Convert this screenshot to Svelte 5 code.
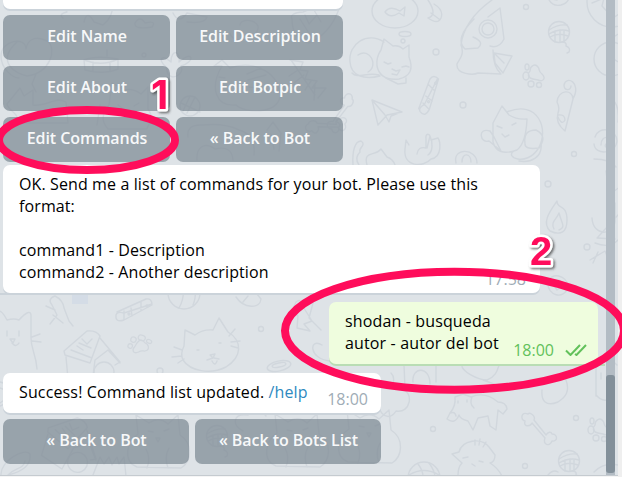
<script>
  const editRows = [
    ['Edit Name', 'Edit Description'],
    ['Edit About', 'Edit Botpic'],
    ['Edit Commands', '« Back to Bot'],
  ];
  const backRow = ['« Back to Bot', '« Back to Bots List'];
</script>

<main class="chat">
  <svg class="doodles" width="618" height="477" viewBox="0 0 618 477" aria-hidden="true">
    <defs>
      <g id="paw"><path d="M0 7c-5-1-6-5-3-8 0-5 5-8 8-4 2 2 0 4 4 7 5 5 0 8-4 6z"/><ellipse cx="-7" cy="4" rx="3" ry="4"/><ellipse cx="-6" cy="-5" rx="2" ry="3"/><circle cx="-2" cy="12" r="3"/><circle cx="6" cy="13" r="2.5"/></g>
      <g id="yarn"><circle r="10.5"/><path d="M-10-2q9-6 18-5M-10 2q10-6 20-3M-9 5q8-5 18-1M-4-1v11M1-2v12M5-1v10M3 10q5 0 4 4 5 2 3 6l-2 1"/></g>
      <g id="bone"><path d="M-10-13c-7-3-8 6-3 7-2 6 5 6 7 2L7 11c-3 7 5 9 7 3 6 1 6-7 0-7-1-3-4-2-6 1L-4-7c2-4-4-8-6-6z"/></g>
      <g id="sleepcat"><path d="M-2-16c-17-11-36 2-34 20 1 14 14 18 30 14M-5-8l3-11 9 7q6-1 10 3l6-4v12q7 18-10 22-19 2-22-13-1-9 4-16zM-34 15c5 6 15-1 27 2M-28-3c12-8 21 11 10 17"/><path d="m-2 4 4 2 3-1m11 4 4-1 3 1M6 11l4 2 4-1-3 5-5-1M0 20l12 6 8-1v-5"/></g>
      <g id="plane"><path d="m-15-12 6 25 9-10 15-3zM-15-12-2 3l4 7 2-6 10-4"/></g>
      <g id="mouse"><path d="M-8 1c1-13 16-13 16-3L0 30q-10-8-7-18 2-5-1-11zM8-2c9-17-7-24-9-14 0 6 7 6 7 1M-7 14q7-1 7 5-3 6-7-3"/></g>
      <g id="cat"><path d="M-20 30-17-7l-2-19q3-6 10 7 7-2 12 0 11-12 12-5v20c-1 13 5 18 6 34M-9-8v5m12-5v5M-6 0h5l-2 4zm2 4q4 5 7 0M16-2l8-3M16 2l9 1"/></g>
      <g id="collar"><path d="m-17 1 29-13q6-1 6 6L-10 9q-9 3-8-5 1-4 8-2L18-7M-10 0v9M7-10v9M-3-3l1 8"/><circle cx="-5" cy="3" r="1"/><circle cx="13" cy="-5" r="1"/></g>
      <g id="sitcat"><path d="M-21 29c-15-6-10-26 1-33l-2-19 13 8Q1-22 10-14l10-9 2 20c14 9 11 27 1 33zM-10-7l5 1m11-1 5-2M-2 0h4l-2 4zM-12 11q5 9 1 19m22-20q-5 9-1 20"/></g>
      <g id="house"><path d="m-25-4 23-20q9-1 13 5L1 8l-25-8zm2 6 2 22 24 5L6 5M11-17 31 7l-5 3M6 5 19-5l12 13M-18-5 3 3M-10-12l12 5"/><circle cx="15" cy="17" r="10"/><path d="m-12-9 6 4m-1-11 5 5 5-5"/></g>
      <g id="flame"><path d="M-8 13c-9-9 1-21 7-30 0 9 10 2 10 19 0 12-6 16-17 11zM-4 11c-4-7 3-10 5-16 3 11 7 14 0 17"/></g>
      <g id="ball"><circle r="16"/><path d="M-15-3q15-9 30 0M-6-14q10 13 1 29M5-15Q15-2 9 12"/></g>
    </defs>
    <g fill="none" stroke="#d1d7dd" stroke-width="1.4" stroke-linecap="round" stroke-linejoin="round">
      <ellipse cx="395" cy="11" rx="23" ry="17"/><path d="M385 12q5-7 15-1l5-4-1 9-5-3q-9 6-14-1zM428 0q10 15 0 18 10 7 13 0 3-8-7-14m-3 9 8 6"/>
      <ellipse cx="405" cy="34" rx="6" ry="2.5"/><circle cx="403" cy="41" r="2"/>
      <use href="#sleepcat" x="386" y="58"/><use href="#plane" x="387" y="112"/><use href="#collar" transform="translate(430 96)rotate(-45)"/>
      <path d="M492 0q-28 20-31 45c4 10-2 14-4 19-1 11 17 11 21 9l23 1q-8-7-8-24M474 19q-20 20-9 30l13-1q7-6-5-11M488 17l12-9 4 31q-5 10-14 7"/>
      <circle cx="488" cy="29" r="9"/><circle cx="488" cy="29" r="6"/>
      <path d="M494 53l18 3-9 17-8-10zm0 0 10 10"/><path d="M548-2q4 9 13 7 7-2 8-7m-17 1 5 1"/>
      <circle cx="526" cy="7" r="2.5"/><circle cx="436" cy="52" r="3"/><circle cx="463" cy="105" r="3"/><circle cx="574" cy="154" r="2.5"/><circle cx="548" cy="184" r="3"/><circle cx="587" cy="247" r="3"/>
      <use href="#yarn" x="559" y="32"/><use href="#paw" x="533" y="72"/><use href="#mouse" x="565" y="101"/>
      <circle cx="612" cy="2" r="25"/><path d="m592 3 12-5-2 8 11 12 9-6"/>
      <circle cx="611" cy="59" r="17"/><circle cx="624" cy="48" r="15"/>
      <path d="M493 123l9-17 7 9q8 5 18 4-1 24-10 31-20 7-24-8 0-10 0-19zM507 112c31-13 43 18 31 37-12 18-34 8-24 2M525 143q-2-13 11-13 12 6 3 18-15 2-14-5M490 131c-13-4-10 13-1 10l12 10-7-14zM541 143c2 15-11 20-22 18M497 126l5 2m10-3 4-2M502 134l3 3 4-2"/>
      <path d="M595 137c4-12 22-8 22 4-1 13-22 15-23 3m7 1c0-12 14-8 10 0-2 5-8 2-5-1"/>
      <path d="M409 145l-3-5-1 9c-2 18 18 19 26 10 12-2 9-18 7-21l-7 2c-1-8-6-7-5-1v9q-8-2-9 6m10-6 3-12c3 6 3 16-2 19"/>
      <path d="M353 165c-1-14 2-24 8-24 6 4-3 7-1 11q-6 6-1 13M367 165c-4-15 8-8 14-16l6 8q6 2 8 8M456 163c-4-16 21-15 21 0m-15-1c0-10 9-9 9 0"/>
      <path d="M611 98q9 7 7 24M594 159q16 0 22 8"/>
      <use href="#bone" transform="translate(342 112)rotate(76)"/>
      <use href="#flame" x="558" y="218"/>
      <path d="M606 171l3 24 12-9M592 218c1 19 22 18 23 3v-18M598 237l20-22m-21 23 18 1m-20 4q15 6 23-3"/>
      <path d="M590 260l15-9 8 19m-20-7 5-11M548 283c2-12 20-8 20 4-4 14-21 8-20-4zm5 1 6-4 4 5-6 5z"/>
      <path d="M17 42c-22 20-1 32 10 34 23-2 31-28 20-35-14-7-20 1-21 8 0-13-25-9-25 7 0 13 12 22 18 22m17-4-4 10m0 0 4 8"/>
      <path d="M84 60q12-5 34-1v10q-14 6-33 1zm0 0q18 7 34-1m-25 3v9m17-9v9"/>
      <path d="M109 105l3-22 13 7q8-2 16 4l7-7v22c8 12-1 15-1 20H108c-8-9-5-16 1-24zM118 105l4 3m12-2 5-3m-14 8 4 2"/>
      <path d="M7 104l13-16 4 8 9-6v15c13 2 23-9 33-3l2 21H15c8-8-7-12-8-19zM97 125l3-20m7-55v6M58 0l9 12q-9 2-4 6M84 22q3-13 10 0l9 3q11-8 10-25M135 23q5-8 10 0 12-3 7 4-18 3-17-4"/>
      <circle cx="144" cy="55" r="2"/>
      <path d="M166 67c-9-8-4-13 5-5 0-14 10-11 8 0 14-13 17 0 2 4 4 7-8 15-13 8zM240 25c1-9 27-4 15 9-10 10-24 6-25-1M173 13q6 12 14 0l20 4q-2 7-20 5"/>
      <path d="M292 19q0 20 17 24 21-9 30-34l-19-4-17 7q-14 1-11 7zm8 0 12 19m-7-23 4 9 8-9m-3-5 7 12"/>
      <path d="M214 66l8-6 8 8c26-10 52 8 50 29-4 18-36 16-44 8-20 2-27-17-14-39zm5 11 6 1m-2 7h4m20-11 14-6m-13 12 18-5m-17 12 18 2"/>
      <path d="m290 60 13 2-3 8 8 1-3 8 12 2-5 7 14 0-8 10M291 60l24 35m-17-25-9 6m15-1-10 8m17-2-6 9m10-5-1 15"/>
      <circle cx="190" cy="106" r="10"/><path d="m181 103 19 9m-10-16-7 15m12-14-8 16"/>
      <path d="M188 137q-2-13 15-12 22-2 36 5 17 5 15 25M197 160c-1-12 7-19 18-11q17-4 18 11M280 132l-7-10-6 8M271 134l3 15m7-16-2 18"/>
      <use href="#bone" transform="translate(325 125)rotate(-48)"/>
      <use href="#cat" x="16" y="339"/><use href="#house" x="89" y="355"/><use href="#collar" x="134" y="311"/><use href="#paw" transform="translate(143 345)rotate(110)scale(.9)"/><use href="#ball" x="184" y="293"/>
      <path d="M50 324l7-9-5-10q-5-6 3-9 8 4 9 12l5 13 4 5m-20-11 10 8m-8-13-9-4"/>
      <path d="M184 346l1-16 10 5q8-6 18-5l6-12 9 14c15 9 14 25-2 35-16 8-36 4-43-7q-3-6 1-14zM197 350h2m20-7h2m-11 12 5-1-2 4zm3 3-6 2m7-2 5 1m-7 2q3 6 5 0m-35-11-8-3m8 9-10 1m6 6 6-4m45-23 6-7m-4 13 9-1m-9 5 7 2"/>
      <circle cx="160" cy="371" r="3"/><circle cx="261" cy="329" r="2.5"/><path d="M72 290h16v14H72z" fill="#d4dce6" stroke="none"/>
      <path d="M236 297c8 12 24 12 25 2l-4-5M248 296l-5 6M296 302q5-4 6 3l10 16-8 3 6 7-13-3 1-12-6-5zM313 303l-4 15 12 12M322 345c-13-8-14 14 8 16"/><ellipse cx="279" cy="366" rx="12" ry="5" transform="rotate(-12 279 366)"/><ellipse cx="279" cy="365" rx="7" ry="2" transform="rotate(-12 279 365)"/>
      <path d="M0 382c18 4 17 19 0 24M0 388c10 3 8 10 0 15M1 475c-1-14 24-28 29-21 2 16-18 20-22 21m0 0c7-8 15-5 17-14M93 475l7-18 4 7 5-7 3 8 5-8 2 7 5-7 2 19"/>
      <use href="#house" transform="translate(70 441)rotate(22)"/><use href="#sitcat" x="158" y="438"/><use href="#yarn" x="217" y="436"/><use href="#sitcat" x="297" y="437"/><use href="#sitcat" x="369" y="433"/>
      <path d="M243 431c-11-5-11-18 5-16l9-9 9 10m111-12c7 19 16 12 19 7 15 3 18-20 6-21m-15-5c6 5 9-7 4-12"/>
      <path d="M405 388l-1-23 32-2v19m-23 0c-2-15 17-17 17 2M462 364c-2 7 16 16 25 16 13-5 10-16 14-17m-18 17 11 4M542 390c-1 11 4 17 16 12 8-5 12-11 8-22"/>
      <path d="M450 413q6-7 5-16l8-3 8 3q14-6 27 5 8 0 9 7l-4 5-5-4-2 20-6-4-2-10-10 2-5 12-5-9q-8-2-9-6-4 10-12 4zm8-10v-2m9 1v-2m-17 13q5-2 6 3M472 397q-3 7 2 11"/>
      <use href="#bone" x="538" y="427"/><circle cx="576" cy="418" r="2.5"/><circle cx="433" cy="429" r="2.5"/><circle cx="525" cy="466" r="2.5"/><use href="#paw" x="598" y="426"/><use href="#yarn" x="569" y="461"/>
      <path d="M548 475q5-6 10-3M458 475q0-8 4-12l-10-9 7-2c3-12 22-15 30-5l6 8q0 7-5 8 8 5 12 13M475 445v-5m4 5 1-6m3 8 3-5m-23 16 5-1m11 4 4 1m-11 2 3 2"/><use href="#ball" x="424" y="478"/>
      <path d="M596 396v-28q9-16 21-3m-16 8v6m8-4v7m-13 13q9 10 18 1M594 472q10-10 24-7"/>
    </g>
  </svg>

  <section class="history">
    <div class="bubble previous"></div>
    <div class="keyboard edit">
      {#each editRows as row}
        <div class="row">{#each row as label}<button>{label}</button>{/each}</div>
      {/each}
    </div>

    <article class="bubble prompt">
      <p>OK. Send me a list of commands for your bot. Please use this<br />format:<br /><br />command1 - Description<br />command2 - Another description</p>
      <time>17:58</time>
    </article>

    <article class="bubble sent">
      <p>shodan - busqueda<br />autor - autor del bot</p>
      <span class="status"><time>18:00</time><svg width="22" height="12" viewBox="0 0 22 12"><path d="M1 6.500 5.500 11 15 1M10 10l1.500 1L21 1" /></svg></span>
    </article>

    <article class="bubble success">
      <p>Success! Command list updated. <span class="link">/help</span></p>
      <time>18:00</time>
    </article>
    <div class="keyboard row back">{#each backRow as label}<button>{label}</button>{/each}</div>
  </section>

  <aside class="scrollbar"><div class="thumb"></div></aside>
  <div class="edge"></div>
  <footer></footer>

  <svg class="marks" width="622" height="477" viewBox="0 0 622 477">
    <defs><filter id="shade" x="-50%" y="-50%" width="200%" height="200%"><feDropShadow dx="1.5" dy="1.5" stdDeviation="1" flood-color="#333" flood-opacity=".7" /></filter></defs>
    <g fill="none" stroke="#ff0d5b" stroke-width="8"><ellipse cx="87" cy="140" rx="88" ry="30" /><ellipse cx="454.500" cy="330.700" rx="169.500" ry="59" /></g>
    <g class="digits" filter="url(#shade)"><text class="one" x="151" y="109">1</text><text x="530" y="265">2</text></g>
  </svg>
</main>

<style>
  :global(body) { margin: 0; overflow: hidden; }
  .chat { position: relative; display: flex; width: 622px; height: 477px; overflow: hidden; background: #dee3e7; font-family: "Open Sans", "Noto Sans", sans-serif; font-size: 16px; line-height: 22px; color: #000; }
  .doodles, .marks { position: absolute; left: 0; top: 0; pointer-events: none; }
  .history { position: relative; display: flex; flex-direction: column; width: 603px; padding-left: 3px; }
  .bubble { position: relative; box-sizing: border-box; display: flex; background: #fff; border-radius: 7px; box-shadow: 0 2px 0 #cbd3da; flex: none; }
  .previous { width: 340px; height: 9px; border-radius: 0 0 7px 7px; }
  .keyboard { display: flex; gap: 6px; }
  .edit { flex-direction: column; width: 340px; margin-top: 6px; }
  .row { display: flex; gap: 6px; }
  button { flex: 1 1 0; min-width: 0; height: 45px; padding: 0 0 3px 1px; border: 0; border-radius: 7px; background: rgba(122, 135, 146, .7); color: #f7f8f9; font: 600 16px/22px "Open Sans", "Noto Sans", sans-serif; letter-spacing: -.06px; white-space: nowrap; }
  p { margin: 0; white-space: nowrap; letter-spacing: .11px; }
  .sent p, .success p { letter-spacing: .14px; }
  time { color: #a0acb6; }
  .prompt { width: 537px; height: 128px; margin-top: 3px; padding: 8px 14px 3px 16px; justify-content: space-between; }
  .prompt::before { content: ""; position: absolute; left: -3px; bottom: -2px; width: 12px; height: 2px; background: #cbd3da; }
  .prompt time { align-self: flex-end; margin-left: -60px; }
  .sent { width: 269px; height: 62px; margin: 9px 0 0 326px; padding: 8px 11px 3px 16px; justify-content: space-between; background: #effdde; box-shadow: 0 2px 0 #b9ddb4; }
  .sent::after { content: ""; position: absolute; right: -7px; bottom: -2px; width: 14px; height: 2px; background: #b9ddb4; }
  .status { align-self: flex-end; display: flex; align-items: center; gap: 11px; color: #62c15b; }
  .status time { color: inherit; }
  .status path { fill: none; stroke: #62c15b; stroke-width: 2; }
  .success { width: 378px; height: 40px; margin-top: 9px; padding: 8px 13px 3px 16px; justify-content: space-between; }
  .success time { align-self: flex-end; }
  .link { color: #2e8abf; }
  .back { width: 378px; margin-top: 6px; }
  .scrollbar { position: relative; width: 9px; height: 477px; padding-top: 375px; box-sizing: border-box; background: #b3bcc4; }
  .thumb { height: 98px; border-radius: 3px; background: #83909a; }
  .edge { position: relative; width: 4px; margin-left: 3px; background: #efefef; }
  footer { position: absolute; left: 0; bottom: 0; width: 618px; height: 1px; border-top: 1px solid #c5cbd0; background: #f5f5f5; }
  .digits text { font: 700 40px "Liberation Sans", Arial, sans-serif; fill: #ff0d5b; stroke: #fff; stroke-width: 5px; stroke-linejoin: round; paint-order: stroke; }
  .digits .one { font-family: Inter, Roboto, sans-serif; }
</style>
